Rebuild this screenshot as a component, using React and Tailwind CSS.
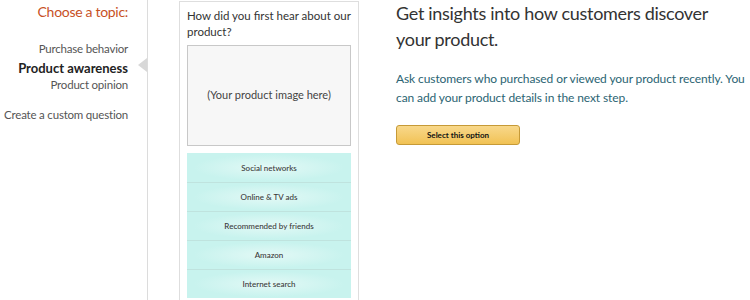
export default function App() {
  const options = ["Social networks", "Online & TV ads", "Recommended by friends", "Amazon", "Internet search"];
  return (
    <div className="w-[750px] h-[300px] overflow-hidden bg-white flex" style={{ fontFamily: 'Lato, "Open Sans", sans-serif' }}>
      <div className="w-[148px] h-full border-r border-[#dcdcdc] relative shrink-0 flex flex-col items-end pr-[19px] text-right whitespace-nowrap">
        <div className="text-[14px] tracking-[-0.3px] leading-[20px] text-[#c7511f] mt-[2px]">Choose a topic:</div>
        <div className="text-[11.5px] tracking-[-0.2px] leading-[16px] text-[#555] mt-[19px]">Purchase behavior</div>
        <div className="text-[13px] leading-[17px] text-[#222] font-bold mt-[3px]">Product awareness</div>
        <div className="text-[11.5px] tracking-[-0.2px] leading-[16px] text-[#555]">Product opinion</div>
        <div className="text-[11.5px] tracking-[-0.2px] leading-[16px] text-[#555] mt-[14px]">Create a custom question</div>
        <div className="absolute right-0 top-[58px] w-0 h-0 border-y-[7px] border-y-transparent border-r-[9px] border-r-[#d8d8d8]"></div>
      </div>
      <div className="ml-[31px] mt-[1px] w-[180px] h-[320px] border border-[#dedede] px-[7px] pt-[6px] shrink-0">
        <div className="text-[11.5px] leading-[16px] text-[#333]">How did you first hear about our product?</div>
        <div className="mt-[5px] h-[101px] border border-[#c8c8c8] bg-[#f7f7f7] flex items-center justify-center text-[11px] text-[#444]">(Your product image here)</div>
        <div className="mt-[7px] bg-[#c8f3ee]">
          {options.map((o, i) => (
            <div key={o} className={"h-[29px] flex items-center justify-center text-[8px] font-medium text-[#3a3a3a] bg-[radial-gradient(ellipse_at_center,#e3f9f6_0%,#c8f3ee_65%)] " + (i > 0 ? "border-t border-[#bfe3de]" : "")}>{o}</div>
          ))}
        </div>
      </div>
      <div className="ml-[37px] flex-1">
        <div className="max-w-[330px] text-[18px] tracking-[-0.3px] leading-[26px] text-[#333]">Get insights into how customers discover your product.</div>
        <div className="mt-[17px] text-[12px] tracking-[-0.1px] leading-[19px] text-[#2b6473]">Ask customers who purchased or viewed your product recently. You can add your product details in the next step.</div>
        <button className="mt-[18px] w-[124px] h-[20px] rounded-[3px] border border-[#c69a37] bg-gradient-to-b from-[#f8d88a] to-[#f1c253] text-[8px] font-bold text-[#111] flex items-center justify-center">Select this option</button>
      </div>
    </div>
  );
}
